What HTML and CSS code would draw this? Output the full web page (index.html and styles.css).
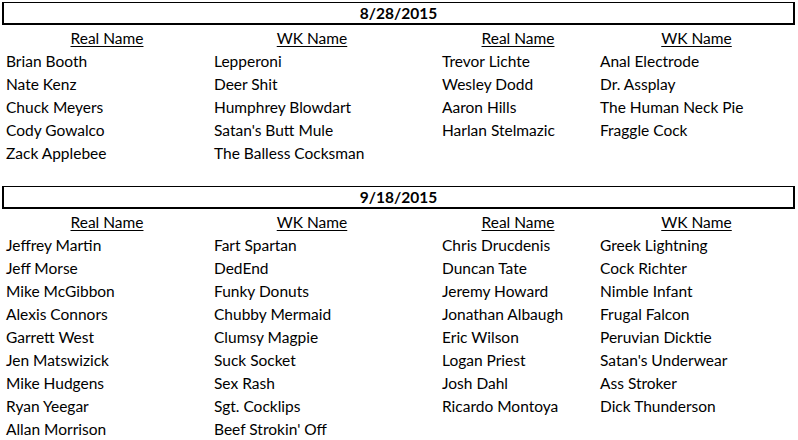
FILE: index.html
```html
<!DOCTYPE html>
<html>
<head>
<meta charset="utf-8">
<link rel="stylesheet" href="styles.css">
</head>
<body>
<div class="sheet">
  <section class="block">
    <div class="date">8/28/2015</div>
    <div class="grid">
      <div class="hd c1">Real Name</div><div class="hd c2">WK Name</div><div class="hd c3">Real Name</div><div class="hd c4">WK Name</div>
      <div class="cell c1">Brian Booth</div><div class="cell c2">Lepperoni</div><div class="cell c3">Trevor Lichte</div><div class="cell c4">Anal Electrode</div>
      <div class="cell c1">Nate Kenz</div><div class="cell c2">Deer Shit</div><div class="cell c3">Wesley Dodd</div><div class="cell c4">Dr. Assplay</div>
      <div class="cell c1">Chuck Meyers</div><div class="cell c2">Humphrey Blowdart</div><div class="cell c3">Aaron Hills</div><div class="cell c4">The Human Neck Pie</div>
      <div class="cell c1">Cody Gowalco</div><div class="cell c2">Satan's Butt Mule</div><div class="cell c3">Harlan Stelmazic</div><div class="cell c4">Fraggle Cock</div>
      <div class="cell c1">Zack Applebee</div><div class="cell c2">The Balless Cocksman</div><div class="cell c3"></div><div class="cell c4"></div>
      <div class="cell c1"></div><div class="cell c2"></div><div class="cell c3"></div><div class="cell c4"></div>
    </div>
  </section>
  <section class="block">
    <div class="date">9/18/2015</div>
    <div class="grid">
      <div class="hd c1">Real Name</div><div class="hd c2">WK Name</div><div class="hd c3">Real Name</div><div class="hd c4">WK Name</div>
      <div class="cell c1">Jeffrey Martin</div><div class="cell c2">Fart Spartan</div><div class="cell c3">Chris Drucdenis</div><div class="cell c4">Greek Lightning</div>
      <div class="cell c1">Jeff Morse</div><div class="cell c2">DedEnd</div><div class="cell c3">Duncan Tate</div><div class="cell c4">Cock Richter</div>
      <div class="cell c1">Mike McGibbon</div><div class="cell c2">Funky Donuts</div><div class="cell c3">Jeremy Howard</div><div class="cell c4">Nimble Infant</div>
      <div class="cell c1">Alexis Connors</div><div class="cell c2">Chubby Mermaid</div><div class="cell c3">Jonathan Albaugh</div><div class="cell c4">Frugal Falcon</div>
      <div class="cell c1">Garrett West</div><div class="cell c2">Clumsy Magpie</div><div class="cell c3">Eric Wilson</div><div class="cell c4">Peruvian Dicktie</div>
      <div class="cell c1">Jen Matswizick</div><div class="cell c2">Suck Socket</div><div class="cell c3">Logan Priest</div><div class="cell c4">Satan's Underwear</div>
      <div class="cell c1">Mike Hudgens</div><div class="cell c2">Sex Rash</div><div class="cell c3">Josh Dahl</div><div class="cell c4">Ass Stroker</div>
      <div class="cell c1">Ryan Yeegar</div><div class="cell c2">Sgt. Cocklips</div><div class="cell c3">Ricardo Montoya</div><div class="cell c4">Dick Thunderson</div>
      <div class="cell c1">Allan Morrison</div><div class="cell c2">Beef Strokin' Off</div><div class="cell c3"></div><div class="cell c4"></div>
    </div>
  </section>
</div>
</body>
</html>
```
FILE: styles.css
```css
html, body {
  margin: 0;
  padding: 0;
  background: #fff;
}
body {
  font-family: Lato, "Open Sans", "Liberation Sans", sans-serif;
  font-size: 15.5px;
  color: #000;
}
.sheet {
  padding: 2px 3px 0 2px;
  width: 793px;
}
.date {
  box-sizing: border-box;
  height: 23px;
  border: 2px solid #000;
  border-top-width: 1px;
  padding-top: 1px;
  text-align: center;
  font-weight: bold;
  line-height: 19px;
}
.grid {
  display: grid;
  grid-template-columns: 210px 200px 186px 197px;
  grid-auto-rows: 23px;
}
.hd, .cell {
  box-sizing: border-box;
  padding-top: 3px;
  line-height: 20px;
  white-space: nowrap;
}
.hd {
  text-decoration: underline;
  text-underline-offset: 2px;
  text-align: center;
}
.hd.c3 { padding-left: 26px; }
.cell.c1 { padding-left: 4px; }
.cell.c2 { padding-left: 2px; }
.cell.c3 { padding-left: 30px; }
.cell.c4 { padding-left: 2px; }
```
